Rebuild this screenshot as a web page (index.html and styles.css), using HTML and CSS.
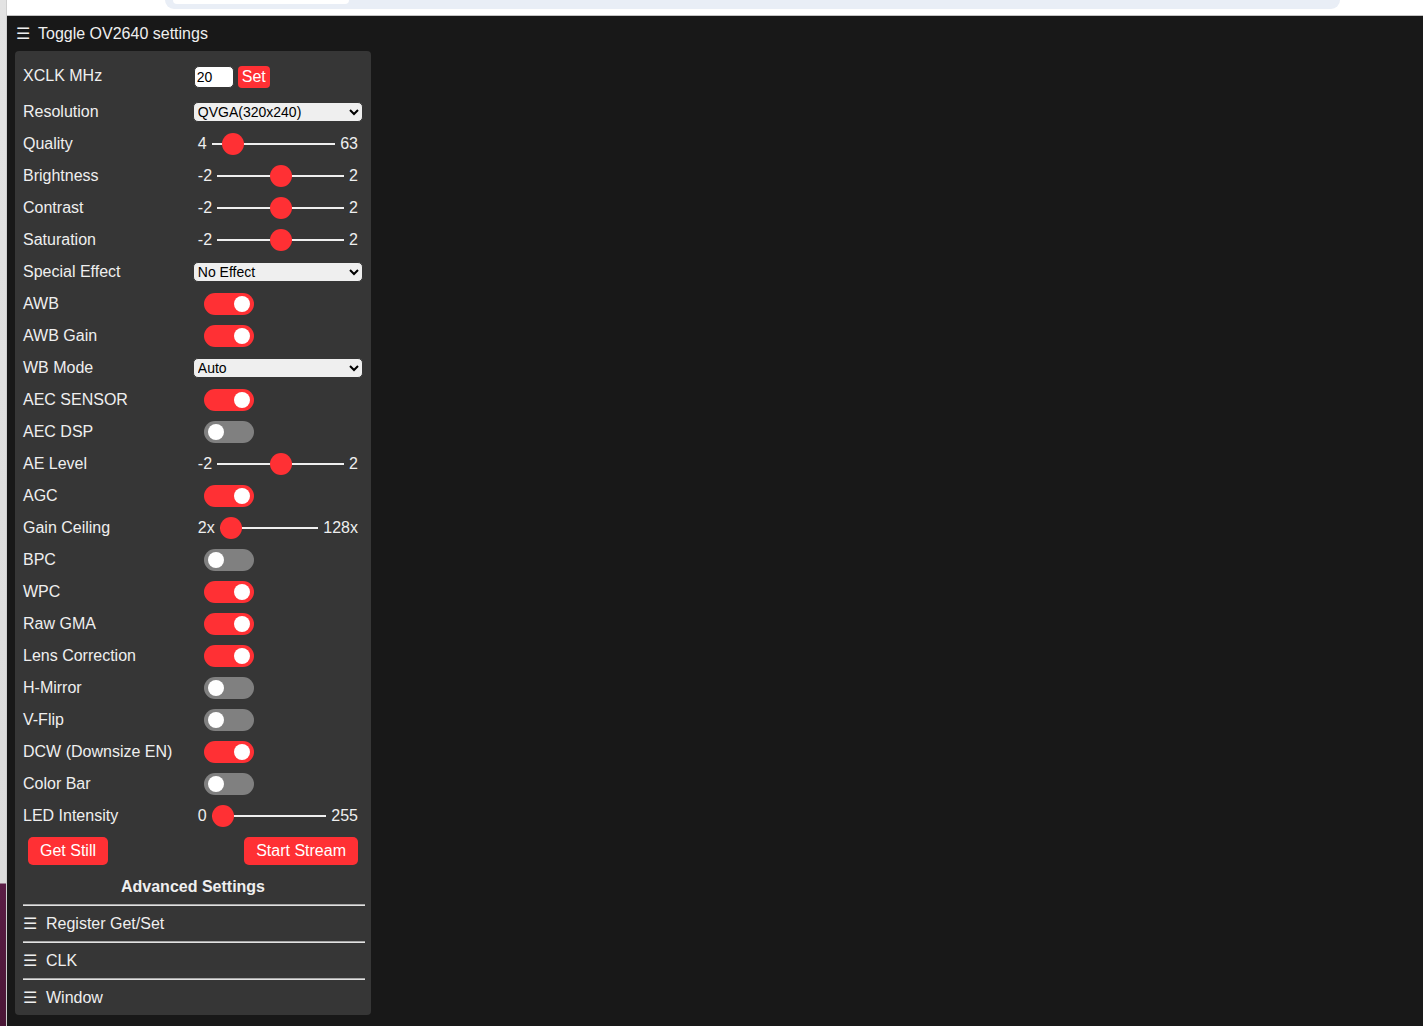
FILE: index.html
```html
<!DOCTYPE html>
<html lang="en">
<head>
    <meta charset="UTF-8">
    <meta name="viewport" content="width=device-width, initial-scale=1.0">
    <title>ESP32 OV2640</title>
    <link rel="stylesheet" href="styles.css">
</head>
<body>
    <div class="desk-edge"></div>
    <div class="window">
        <div class="browser-bar">
            <div class="omnibox"><div class="omnibox-chip"></div></div>
        </div>

        <section class="main">
            <label class="nav-toggle"><span class="burger">☰</span>Toggle OV2640 settings</label>

            <nav class="menu">
                <div class="groups">
                    <div class="input-group xclk">
                        <label>XCLK MHz</label>
                        <input class="text-input" type="text" value="20">
                        <button class="inline-button">Set</button>
                    </div>
                    <div class="input-group">
                        <label>Resolution</label>
                        <select><option>QVGA(320x240)</option></select>
                    </div>
                    <div class="input-group">
                        <label>Quality</label>
                        <div class="range-min">4</div>
                        <input type="range" min="4" max="63" value="10">
                        <div class="range-max">63</div>
                    </div>
                    <div class="input-group">
                        <label>Brightness</label>
                        <div class="range-min">-2</div>
                        <input type="range" min="-2" max="2" value="0">
                        <div class="range-max">2</div>
                    </div>
                    <div class="input-group">
                        <label>Contrast</label>
                        <div class="range-min">-2</div>
                        <input type="range" min="-2" max="2" value="0">
                        <div class="range-max">2</div>
                    </div>
                    <div class="input-group">
                        <label>Saturation</label>
                        <div class="range-min">-2</div>
                        <input type="range" min="-2" max="2" value="0">
                        <div class="range-max">2</div>
                    </div>
                    <div class="input-group">
                        <label>Special Effect</label>
                        <select><option>No Effect</option></select>
                    </div>
                    <div class="input-group">
                        <label>AWB</label>
                        <label class="switch"><input type="checkbox" checked><span class="slider"></span></label>
                    </div>
                    <div class="input-group">
                        <label>AWB Gain</label>
                        <label class="switch"><input type="checkbox" checked><span class="slider"></span></label>
                    </div>
                    <div class="input-group">
                        <label>WB Mode</label>
                        <select><option>Auto</option></select>
                    </div>
                    <div class="input-group">
                        <label>AEC SENSOR</label>
                        <label class="switch"><input type="checkbox" checked><span class="slider"></span></label>
                    </div>
                    <div class="input-group">
                        <label>AEC DSP</label>
                        <label class="switch"><input type="checkbox"><span class="slider"></span></label>
                    </div>
                    <div class="input-group">
                        <label>AE Level</label>
                        <div class="range-min">-2</div>
                        <input type="range" min="-2" max="2" value="0">
                        <div class="range-max">2</div>
                    </div>
                    <div class="input-group">
                        <label>AGC</label>
                        <label class="switch"><input type="checkbox" checked><span class="slider"></span></label>
                    </div>
                    <div class="input-group">
                        <label>Gain Ceiling</label>
                        <div class="range-min">2x</div>
                        <input type="range" min="0" max="6" value="0">
                        <div class="range-max">128x</div>
                    </div>
                    <div class="input-group">
                        <label>BPC</label>
                        <label class="switch"><input type="checkbox"><span class="slider"></span></label>
                    </div>
                    <div class="input-group">
                        <label>WPC</label>
                        <label class="switch"><input type="checkbox" checked><span class="slider"></span></label>
                    </div>
                    <div class="input-group">
                        <label>Raw GMA</label>
                        <label class="switch"><input type="checkbox" checked><span class="slider"></span></label>
                    </div>
                    <div class="input-group">
                        <label>Lens Correction</label>
                        <label class="switch"><input type="checkbox" checked><span class="slider"></span></label>
                    </div>
                    <div class="input-group">
                        <label>H-Mirror</label>
                        <label class="switch"><input type="checkbox"><span class="slider"></span></label>
                    </div>
                    <div class="input-group">
                        <label>V-Flip</label>
                        <label class="switch"><input type="checkbox"><span class="slider"></span></label>
                    </div>
                    <div class="input-group">
                        <label>DCW (Downsize EN)</label>
                        <label class="switch"><input type="checkbox" checked><span class="slider"></span></label>
                    </div>
                    <div class="input-group">
                        <label>Color Bar</label>
                        <label class="switch"><input type="checkbox"><span class="slider"></span></label>
                    </div>
                    <div class="input-group">
                        <label>LED Intensity</label>
                        <div class="range-min">0</div>
                        <input type="range" min="0" max="255" value="0">
                        <div class="range-max">255</div>
                    </div>
                </div>

                <section class="buttons">
                    <button>Get Still</button>
                    <button>Start Stream</button>
                </section>

                <div class="advanced-title">Advanced Settings</div>

                <hr>
                <label class="nav-toggle section-toggle"><span class="burger">☰</span>Register Get/Set</label>
                <hr>
                <label class="nav-toggle section-toggle"><span class="burger">☰</span>CLK</label>
                <hr>
                <label class="nav-toggle section-toggle"><span class="burger">☰</span>Window</label>
            </nav>
        </section>
    </div>
</body>
</html>
```

FILE: styles.css
```css
html, body {
    margin: 0;
    padding: 0;
    height: 100%;
}

body {
    display: flex;
    font-family: "Liberation Sans", Arial, Helvetica, sans-serif;
    font-size: 16px;
    color: #efefef;
    background: #181818;
    overflow: hidden;
}

/* strip of desktop left of the window */
.desk-edge {
    width: 7px;
    flex-shrink: 0;
    background: linear-gradient(to bottom, #e3e3e3 0, #dcdcdc 883px, #5a1d45 884px, #4a1636 100%);
    box-shadow: inset -1px 0 0 #cfcfcf;
}

.window {
    flex-grow: 1;
    display: flex;
    flex-direction: column;
}

.browser-bar {
    height: 15px;
    background: #fff;
    border-bottom: 1px solid #c4c4c4;
    padding-left: 158px;
    padding-right: 83px;
}

.omnibox {
    height: 9px;
    background: #e9eef6;
    border-radius: 0 0 12px 12px;
    padding-left: 8px;
}

.omnibox-chip {
    width: 176px;
    height: 4px;
    background: #fff;
    border-radius: 0 0 8px 8px;
}

.main {
    flex-grow: 1;
    padding: 8px;
}

.nav-toggle {
    display: block;
    height: 19px;
    line-height: 19px;
    cursor: pointer;
}

.burger {
    display: inline-block;
    vertical-align: top;
    width: 23px;
    line-height: 19px;
    font-family: "DejaVu Sans", sans-serif;
    font-size: 16px;
}

.main > .nav-toggle .burger {
    width: 22px;
    margin-left: 1px;
}

.main > .nav-toggle {
    margin-bottom: 8px;
}

.menu {
    width: 340px;
    padding: 8px;
    background: #363636;
    border-radius: 4px;
}

.groups {
    display: flex;
    flex-direction: column;
    gap: 10px;
    margin-top: 6px;
}

.input-group {
    display: flex;
    flex-wrap: nowrap;
    align-items: flex-start;
    height: 22px;
    line-height: 22px;
}

.input-group.xclk {
    height: 26px;
}

.input-group > label {
    display: inline-block;
    min-width: 47%;
    padding-right: 10px;
}

.text-input {
    box-sizing: border-box;
    width: 40px;
    height: 22px;
    margin: 1px 0 0 1px;
    padding: 0 2px;
    border: 1px solid #363636;
    border-radius: 5px;
    font-family: "Liberation Sans", Arial, sans-serif;
    font-size: 14px;
    color: #000;
    background: #fff;
    outline: 0;
}

button {
    display: block;
    margin: 0 5px;
    padding: 0 12px;
    border: 0;
    line-height: 28px;
    cursor: pointer;
    color: #fff;
    background: #ff3034;
    border-radius: 5px;
    font-family: "Liberation Sans", Arial, sans-serif;
    font-size: 16px;
    outline: 0;
}

.inline-button {
    margin: 1px 0 0 4px;
    padding: 0 4px;
    line-height: 22px;
    border-radius: 4px;
}

select {
    flex-grow: 1;
    height: 20px;
    margin-top: 1px;
    border: 1px solid #363636;
    border-radius: 5px;
    background-color: #efefef;
    color: #000;
    font-family: "Liberation Sans", Arial, sans-serif;
    font-size: 14px;
    outline: 0;
}

.range-min,
.range-max {
    display: inline-block;
    padding: 0 5px;
}

input[type=range] {
    -webkit-appearance: none;
    flex-grow: 1;
    width: 100%;
    min-width: 0;
    height: 22px;
    margin: 0;
    background: #363636;
    cursor: pointer;
}

input[type=range]::-webkit-slider-runnable-track {
    height: 2px;
    background: #efefef;
    border: 0;
}

input[type=range]::-webkit-slider-thumb {
    -webkit-appearance: none;
    width: 22px;
    height: 22px;
    margin-top: -10px;
    border: 0;
    border-radius: 50%;
    background: #ff3034;
}

/* toggle switches */
.switch {
    display: block;
    height: 22px;
    margin-left: 11px;
}

.switch input {
    display: none;
}

.slider {
    display: inline-block;
    width: 50px;
    height: 22px;
    border-radius: 22px;
    background-color: grey;
    cursor: pointer;
}

.slider:before {
    content: "";
    display: block;
    position: relative;
    left: 4px;
    top: 3px;
    width: 16px;
    height: 16px;
    border-radius: 50%;
    background-color: #fff;
}

input:checked + .slider {
    background-color: #ff3034;
}

input:checked + .slider:before {
    transform: translateX(26px);
}

.buttons {
    display: flex;
    justify-content: space-between;
    margin-top: 10px;
}

.advanced-title {
    margin-top: 12px;
    text-align: center;
    font-weight: bold;
    line-height: 19px;
}

hr {
    height: 0;
    margin: 8px -2px 8px 0;
    border: 0;
    border-top: 1px solid #a8a8a8;
    border-bottom: 1px solid #e2e2e2;
}
```
